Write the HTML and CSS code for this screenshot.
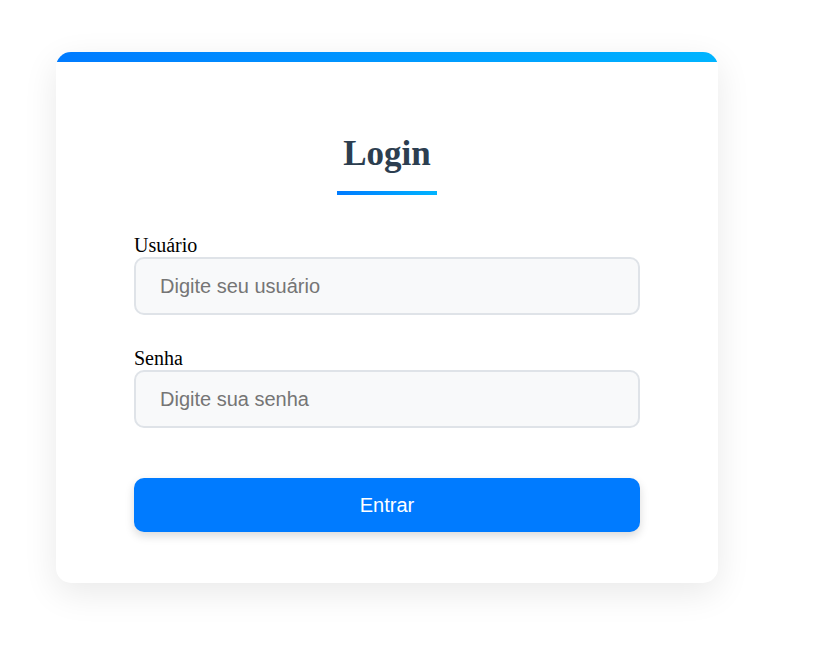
FILE: index.html
```html
<!DOCTYPE html>
<html lang="pt-BR">
<head>
<meta charset="utf-8">
<title>Login</title>
<link rel="stylesheet" href="styles.css">
</head>
<body>
<div class="page">
  <div class="card">
    <div class="card-bar"></div>
    <form class="form">
      <h2 class="title">Login</h2>
      <div class="title-line"></div>
      <label class="label" for="user">Usuário</label>
      <input class="input" id="user" type="text" placeholder="Digite seu usuário">
      <label class="label label-second" for="pass">Senha</label>
      <input class="input" id="pass" type="password" placeholder="Digite sua senha">
      <button class="button" type="button">Entrar</button>
    </form>
  </div>
</div>
</body>
</html>
```

FILE: styles.css
```css
html, body {
  margin: 0;
  padding: 0;
  background: #ffffff;
}

.page {
  padding: 52px 0 60px 56px;
}

.card {
  width: 662px;
  background: #ffffff;
  border-radius: 15px;
  overflow: hidden;
  box-shadow: 0 10px 35px rgba(0, 0, 0, 0.09);
}

.card-bar {
  height: 10px;
  background: linear-gradient(90deg, #007bff, #00b4ff);
}

.form {
  display: flex;
  flex-direction: column;
  padding: 72px 78px 51px;
}

.title {
  margin: 0;
  text-align: center;
  font-family: "Liberation Serif", "Times New Roman", serif;
  font-weight: bold;
  font-size: 35px;
  color: #2c3e50;
}

.title-line {
  align-self: center;
  width: 100px;
  height: 4px;
  margin-top: 17px;
  margin-bottom: 39px;
  background: linear-gradient(90deg, #007bff, #00b4ff);
}

.label {
  display: block;
  font-family: "Liberation Serif", "Times New Roman", serif;
  font-size: 20px;
  color: #000000;
  margin-bottom: 0;
}

.label-second {
  margin-top: 32px;
}

.input {
  box-sizing: border-box;
  height: 58px;
  width: 100%;
  margin: 0;
  padding: 0 24px;
  border: 2px solid #dfe3e8;
  border-radius: 10px;
  background: #f8f9fa;
  font-family: "Liberation Sans", Arial, sans-serif;
  font-size: 20px;
  color: #333333;
  outline: none;
}

.input::placeholder {
  color: #757575;
}

.button {
  margin-top: 50px;
  height: 54px;
  width: 100%;
  border: none;
  border-radius: 10px;
  background: #007bff;
  color: #ffffff;
  font-family: "Liberation Sans", Arial, sans-serif;
  font-size: 20px;
  box-shadow: 0 4px 10px rgba(0, 0, 0, 0.15);
  cursor: pointer;
}
```
